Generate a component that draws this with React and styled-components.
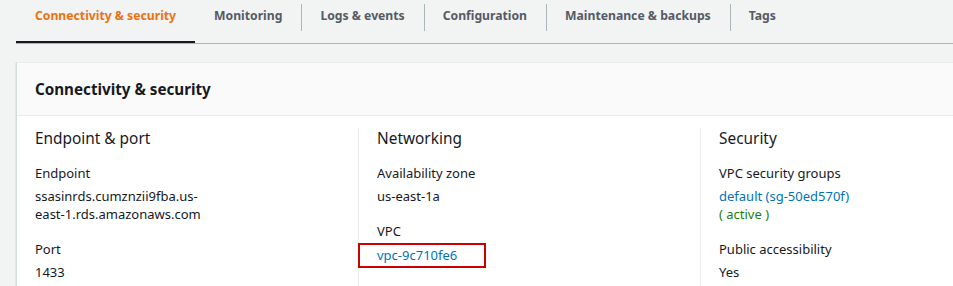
import React from "react";
import styled, { createGlobalStyle } from "styled-components";

const GlobalStyle = createGlobalStyle`
  body {
    margin: 0;
    background: #f2f3f3;
    font-family: "Noto Sans", "Liberation Sans", Arial, sans-serif;
    color: #16191f;
    overflow: hidden;
  }
`;

const Page = styled.div`
  width: 953px;
  height: 286px;
  overflow: hidden;
`;

const TabBar = styled.div`
  display: flex;
  margin-left: 16px;
  width: 1100px;
  border-bottom: 1px solid #aab7b8;
`;

const Tab = styled.div`
  position: relative;
  height: 43px;
  padding: 6px 19px 0;
  box-sizing: border-box;
  line-height: 20px;
  font-size: 12.2px;
  font-weight: 700;
  white-space: nowrap;
  color: ${(p) => (p.active ? "#ec7211" : "#545b64")};
  box-shadow: ${(p) => (p.active ? "inset 0 -2px 0 #16191f" : "none")};

  & + &::before {
    content: "";
    position: absolute;
    left: 0;
    top: 4px;
    height: 27px;
    border-left: 1px solid #aab7b8;
  }
`;

const Card = styled.section`
  margin: 18px 0 0 16px;
  width: 1100px;
  background: #fff;
  border-left: 1px solid #d5dbdb;
  border-top: 1px solid #eaeded;
  box-shadow: 0 1px 1px 0 rgba(0, 28, 36, 0.3);
`;

const CardHeader = styled.header`
  height: 52px;
  display: flex;
  align-items: center;
  padding-left: 18px;
  background: #fafafa;
  border-bottom: 1px solid #eaeded;
  font-size: 15.2px;
  font-weight: 700;
`;

const Columns = styled.div`
  display: grid;
  grid-template-columns: 341px 342px 342px;
  padding-top: 12px;
`;

const Column = styled.div`
  padding-left: 18px;
  border-left: ${(p) => (p.first ? "none" : "1px solid #eaeded")};
  padding-bottom: 40px;
`;

const ColumnTitle = styled.h3`
  margin: 0 0 12px;
  font-size: 15.4px;
  font-weight: 400;
  line-height: 22px;
`;

const Field = styled.div`
  margin-bottom: 15px;
`;

const Label = styled.div`
  font-size: 13px;
  line-height: 22px;
  padding-bottom: 3px;
`;

const Value = styled.div`
  font-size: 13px;
  line-height: 18px;
  width: ${(p) => p.width || "auto"};
  color: ${(p) => p.color || "#16191f"};
`;

const Link = styled.a`
  color: #0073bb;
  text-decoration: none;
`;

const Highlight = styled.span`
  display: inline-block;
  margin: -2px 0 0 -19px;
  padding: 1px 0 2px 17px;
  width: 107px;
  border: 2px solid #c00;
`;

const tabs = [
  "Connectivity & security",
  "Monitoring",
  "Logs & events",
  "Configuration",
  "Maintenance & backups",
  "Tags",
];

export default function App() {
  return (
    <Page>
      <GlobalStyle />
      <TabBar>
        {tabs.map((t, i) => (
          <Tab key={t} active={i === 0}>
            {t}
          </Tab>
        ))}
      </TabBar>
      <Card>
        <CardHeader>Connectivity &amp; security</CardHeader>
        <Columns>
          <Column first>
            <ColumnTitle>Endpoint &amp; port</ColumnTitle>
            <Field>
              <Label>Endpoint</Label>
              <Value width="190px">ssasinrds.cumznzii9fba.us-east-1.rds.amazonaws.com</Value>
            </Field>
            <Field>
              <Label>Port</Label>
              <Value>1433</Value>
            </Field>
          </Column>
          <Column>
            <ColumnTitle>Networking</ColumnTitle>
            <Field>
              <Label>Availability zone</Label>
              <Value>us-east-1a</Value>
            </Field>
            <Field>
              <Label>VPC</Label>
              <Value>
                <Highlight>
                  <Link href="#">vpc-9c710fe6</Link>
                </Highlight>
              </Value>
            </Field>
            <Field>
              <Label>Subnet group</Label>
            </Field>
          </Column>
          <Column>
            <ColumnTitle>Security</ColumnTitle>
            <Field>
              <Label>VPC security groups</Label>
              <Value>
                <Link href="#">default (sg-50ed570f)</Link>
              </Value>
              <Value color="#1d8102">( active )</Value>
            </Field>
            <Field>
              <Label>Public accessibility</Label>
              <Value>Yes</Value>
            </Field>
          </Column>
        </Columns>
      </Card>
    </Page>
  );
}
